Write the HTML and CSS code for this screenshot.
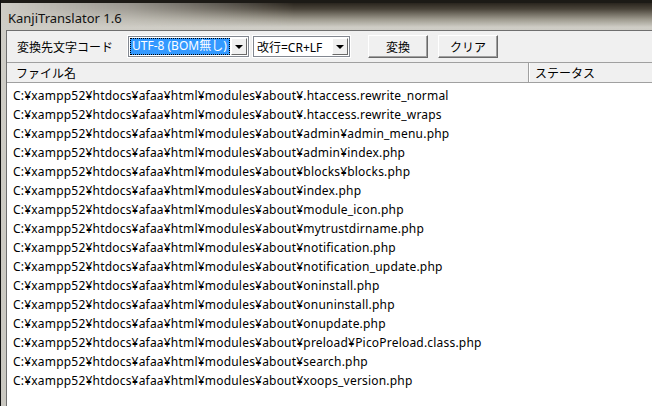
FILE: index.html
```html
<!DOCTYPE html>
<html lang="ja">
<head>
<meta charset="UTF-8" />
<meta name="viewport" content="width=device-width, initial-scale=1" />
<title>KanjiTranslator 1.6</title>
<link rel="stylesheet" href="styles.css">
</head>
<body>

<div class="window">
  <div class="titlebar">
    <span class="title">KanjiTranslator 1.6</span>
  </div>

  <div class="client">
    <div class="toolbar">
      <div class="label">変換先文字コード</div>
      <div class="combo combo-code">
        <div class="combo-value"><span class="selected">UTF-8 (BOM無し)</span></div>
        <div class="combo-arrow"></div>
      </div>
      <div class="combo combo-eol">
        <div class="combo-value">改行=CR+LF</div>
        <div class="combo-arrow"></div>
      </div>
      <button class="btn btn-convert">変換</button>
      <button class="btn">クリア</button>
    </div>

    <div class="list">
      <div class="list-header">
        <div class="col col-name">ファイル名</div>
        <div class="col col-status">ステータス</div>
      </div>
      <div class="list-body">
        <div class="row">C:¥xampp52¥htdocs¥afaa¥html¥modules¥about¥.htaccess.rewrite_normal</div>
        <div class="row">C:¥xampp52¥htdocs¥afaa¥html¥modules¥about¥.htaccess.rewrite_wraps</div>
        <div class="row">C:¥xampp52¥htdocs¥afaa¥html¥modules¥about¥admin¥admin_menu.php</div>
        <div class="row">C:¥xampp52¥htdocs¥afaa¥html¥modules¥about¥admin¥index.php</div>
        <div class="row">C:¥xampp52¥htdocs¥afaa¥html¥modules¥about¥blocks¥blocks.php</div>
        <div class="row">C:¥xampp52¥htdocs¥afaa¥html¥modules¥about¥index.php</div>
        <div class="row">C:¥xampp52¥htdocs¥afaa¥html¥modules¥about¥module_icon.php</div>
        <div class="row">C:¥xampp52¥htdocs¥afaa¥html¥modules¥about¥mytrustdirname.php</div>
        <div class="row">C:¥xampp52¥htdocs¥afaa¥html¥modules¥about¥notification.php</div>
        <div class="row">C:¥xampp52¥htdocs¥afaa¥html¥modules¥about¥notification_update.php</div>
        <div class="row">C:¥xampp52¥htdocs¥afaa¥html¥modules¥about¥oninstall.php</div>
        <div class="row">C:¥xampp52¥htdocs¥afaa¥html¥modules¥about¥onuninstall.php</div>
        <div class="row">C:¥xampp52¥htdocs¥afaa¥html¥modules¥about¥onupdate.php</div>
        <div class="row">C:¥xampp52¥htdocs¥afaa¥html¥modules¥about¥preload¥PicoPreload.class.php</div>
        <div class="row">C:¥xampp52¥htdocs¥afaa¥html¥modules¥about¥search.php</div>
        <div class="row">C:¥xampp52¥htdocs¥afaa¥html¥modules¥about¥xoops_version.php</div>
      </div>
    </div>
  </div>
</div>

</body>
</html>
```

FILE: styles.css
```css
* {
  box-sizing: border-box;
}
body, html {
  margin: 0; padding: 0;
  height: 100%;
  overflow: hidden;
  font-family: 'Noto Sans', 'Noto Sans CJK JP', sans-serif;
  color: #000;
}
.window {
  height: 100%;
  display: flex;
  flex-direction: column;
  border-left: 1px solid #111;
  background: linear-gradient(to bottom, #1c1a16 0, #1c1a16 3px, #cfcdc6 3px, #cac8c1 100%);
}
.titlebar {
  position: relative;
  height: 30px;
  flex: none;
  padding: 6px 0 0 7px;
}
.titlebar::before {
  content: '';
  position: absolute;
  left: 0; right: 0; top: 3px; height: 24px;
  background: linear-gradient(to bottom, #2a251e 0, #4a443a 6px, #9b978b 16px, rgba(200,198,190,0) 24px);
  -webkit-mask-image: linear-gradient(to right, transparent 0, rgba(0,0,0,.35) 20%, #000 45%, #000 100%);
  mask-image: linear-gradient(to right, transparent 0, rgba(0,0,0,.35) 20%, #000 45%, #000 100%);
}
.title {
  position: relative;
  font-family: 'Noto Sans', sans-serif;
  font-size: 13px;
  color: #111;
}
.client {
  flex: 1;
  margin-left: 5px;
  border-left: 1px solid #6f6f6f;
  border-top: 1px solid #6f6f6f;
  background: #f0f0f0;
  display: flex;
  flex-direction: column;
  font-size: 12px;
}
.toolbar {
  height: 31px;
  display: flex;
  align-items: center;
  padding-left: 10px;
}
.label {
  width: 111px;
  font-family: 'Noto Sans CJK JP', sans-serif;
}
.combo {
  height: 21px;
  display: flex;
  background: #fff;
  border: 1px solid #828790;
  box-shadow: 0 0 0 1px #fff;
  padding: 1px;
}
.combo-code {
  width: 121px;
}
.combo-eol {
  width: 97px;
  margin-left: 4px;
}
.combo-value {
  flex: 1;
  display: flex;
  align-items: center;
  padding-left: 2px;
  white-space: nowrap;
  overflow: hidden;
  font-family: 'Noto Sans', 'Noto Sans CJK JP', sans-serif;
}
.combo-code .combo-value {
  padding-left: 0;
}
.selected {
  display: block;
  width: 100%;
  height: 100%;
  line-height: 15px;
  background: #3399ff;
  color: #fff;
  outline: 1px dotted #000;
  outline-offset: -1px;
  padding: 0 2px;
}
.combo-arrow {
  width: 16px;
  margin-left: 1px;
  background: #f0f0f0;
  border: 1px solid;
  border-color: #fff #696969 #696969 #fff;
  display: flex;
  align-items: center;
  justify-content: center;
}
.combo-arrow::after {
  content: '';
  border-left: 4px solid transparent;
  border-right: 4px solid transparent;
  border-top: 4px solid #000;
}
.btn {
  width: 60px;
  height: 23px;
  margin-left: 10px;
  padding: 0;
  font: inherit;
  font-family: 'Noto Sans CJK JP', sans-serif;
  font-size: 12px;
  color: #000;
  background: #f0f0f0;
  border: 1px solid;
  border-color: #fff #696969 #696969 #fff;
  box-shadow: inset -1px -1px 0 #a0a0a0;
}
.btn-convert {
  margin-left: 18px;
}
.list {
  flex: 1;
  display: flex;
  flex-direction: column;
  border-top: 1px solid #a0a0a0;
  background: #fff;
}
.list-header {
  height: 20px;
  display: flex;
  background: #f0f0f0;
  border-bottom: 1px solid #a0a0a0;
  font-family: 'Noto Sans CJK JP', sans-serif;
}
.col {
  display: flex;
  align-items: center;
  padding-left: 9px;
}
.col-name {
  width: 522px;
  border-right: 1px solid #a0a0a0;
  box-shadow: 1px 0 0 #fff;
}
.col-status {
  padding-left: 6px;
}
.list-body {
  padding: 3px 0 0 6px;
}
.row {
  height: 19px;
  line-height: 19px;
  white-space: nowrap;
  letter-spacing: 0.2px;
}
```
